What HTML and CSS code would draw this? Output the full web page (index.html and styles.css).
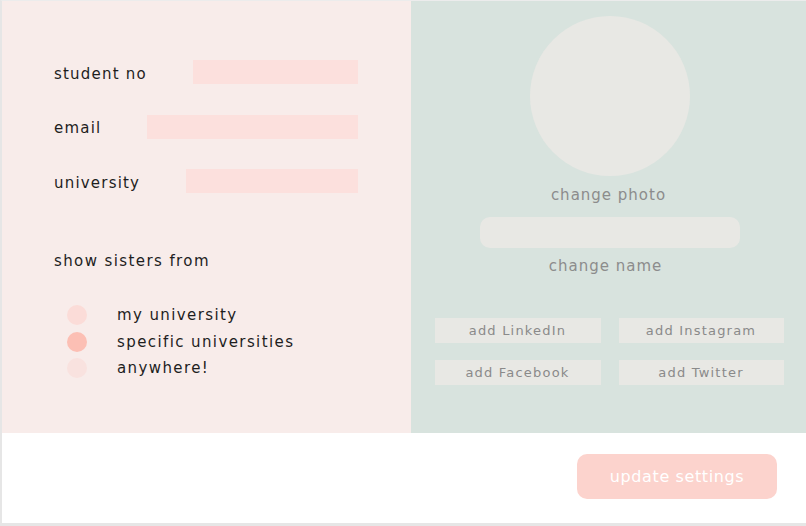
FILE: index.html
```html
<!DOCTYPE html>
<html>
<head>
<meta charset="utf-8">
<link rel="stylesheet" href="styles.css">
</head>
<body>
<div class="frame">
  <div class="top">
    <section class="left">
      <div class="fields">
        <div class="field"><span class="label">student no</span><span class="input"></span></div>
        <div class="field"><span class="label">email</span><span class="input"></span></div>
        <div class="field"><span class="label">university</span><span class="input"></span></div>
      </div>
      <div class="show">show sisters from</div>
      <div class="radios">
        <div class="radio"><span class="dot"></span><span>my university</span></div>
        <div class="radio"><span class="dot on"></span><span>specific universities</span></div>
        <div class="radio"><span class="dot faint"></span><span>anywhere!</span></div>
      </div>
    </section>
    <section class="right">
      <div class="photo"></div>
      <div class="caption photo-cap">change photo</div>
      <div class="name-input"></div>
      <div class="caption name-cap">change name</div>
      <div class="socials">
        <div class="social">add LinkedIn</div>
        <div class="social">add Instagram</div>
        <div class="social">add Facebook</div>
        <div class="social">add Twitter</div>
      </div>
    </section>
  </div>
  <div class="bottom">
    <div class="update">update settings</div>
  </div>
</div>
</body>
</html>
```
FILE: styles.css
```css
* { box-sizing: border-box; }
html, body { margin: 0; padding: 0; background: #ffffff; }
body {
  font-family: "DejaVu Sans", "Liberation Sans", sans-serif;
  width: 806px;
  height: 526px;
  overflow: hidden;
}
.frame {
  width: 806px;
  height: 526px;
  border-left: 2px solid #e6e6e6;
  border-top: 1px solid #ececec;
  border-bottom: 3px solid #e6e6e6;
  display: flex;
  flex-direction: column;
}
.top {
  display: flex;
  height: 432px;
}
.left {
  width: 409px;
  background: #f8ecea;
  padding: 59px 53px 0 52px;
}
.fields {
  display: flex;
  flex-direction: column;
  gap: 30.5px;
}
.field {
  display: flex;
  align-items: center;
  gap: 46px;
  height: 24px;
}
.label {
  font-size: 15px;
  letter-spacing: 1.2px;
  color: #1e1e1e;
  white-space: nowrap;
  padding-top: 3px;
}
.input {
  flex: 1;
  height: 24px;
  background: #fce0dd;
}
.show {
  margin-top: 58px;
  font-size: 15px;
  letter-spacing: 1.4px;
  color: #1e1e1e;
  line-height: 20px;
}
.radios {
  margin-top: 34px;
  padding-left: 13px;
  display: flex;
  flex-direction: column;
  gap: 6.5px;
}
.radio {
  display: flex;
  align-items: center;
  gap: 30px;
  height: 20px;
  font-size: 15px;
  letter-spacing: 1.4px;
  color: #1e1e1e;
}
.dot {
  width: 20px;
  height: 20px;
  border-radius: 50%;
  background: #fbdcd8;
  flex: none;
}
.dot.on { background: #fcbfb4; }
.dot.faint { background: #f9e2df; }
.right {
  flex: 1;
  background: #d8e3de;
  display: flex;
  flex-direction: column;
  align-items: center;
  padding-top: 15px;
}
.photo {
  width: 160px;
  height: 160px;
  border-radius: 50%;
  background: #e8e8e4;
  margin-left: 3px;
}
.caption {
  font-size: 15px;
  letter-spacing: 1px;
  color: #8c8c8c;
  line-height: 20px;
}
.photo-cap { margin-top: 9px; }
.name-input {
  margin-top: 12px;
  width: 260px;
  height: 31px;
  border-radius: 10px;
  background: #e8e8e4;
  margin-left: 3px;
}
.name-cap { margin-top: 8px; margin-left: -6px; }
.socials {
  margin-top: 42px;
  display: grid;
  grid-template-columns: 166px 165px;
  column-gap: 18px;
  row-gap: 17px;
  margin-left: 1px;
}
.social {
  height: 25px;
  background: #e8e8e4;
  color: #8a8a8a;
  font-size: 13px;
  letter-spacing: 1.2px;
  display: flex;
  align-items: center;
  justify-content: center;
}
.bottom {
  flex: 1;
  background: #ffffff;
  display: flex;
  justify-content: flex-end;
  align-items: flex-start;
  padding: 21px 29px 0 0;
}
.update {
  width: 200px;
  height: 45px;
  border-radius: 10px;
  background: #fcd3cd;
  color: #ffffff;
  font-size: 16px;
  letter-spacing: 0.6px;
  display: flex;
  align-items: center;
  justify-content: center;
}
```
